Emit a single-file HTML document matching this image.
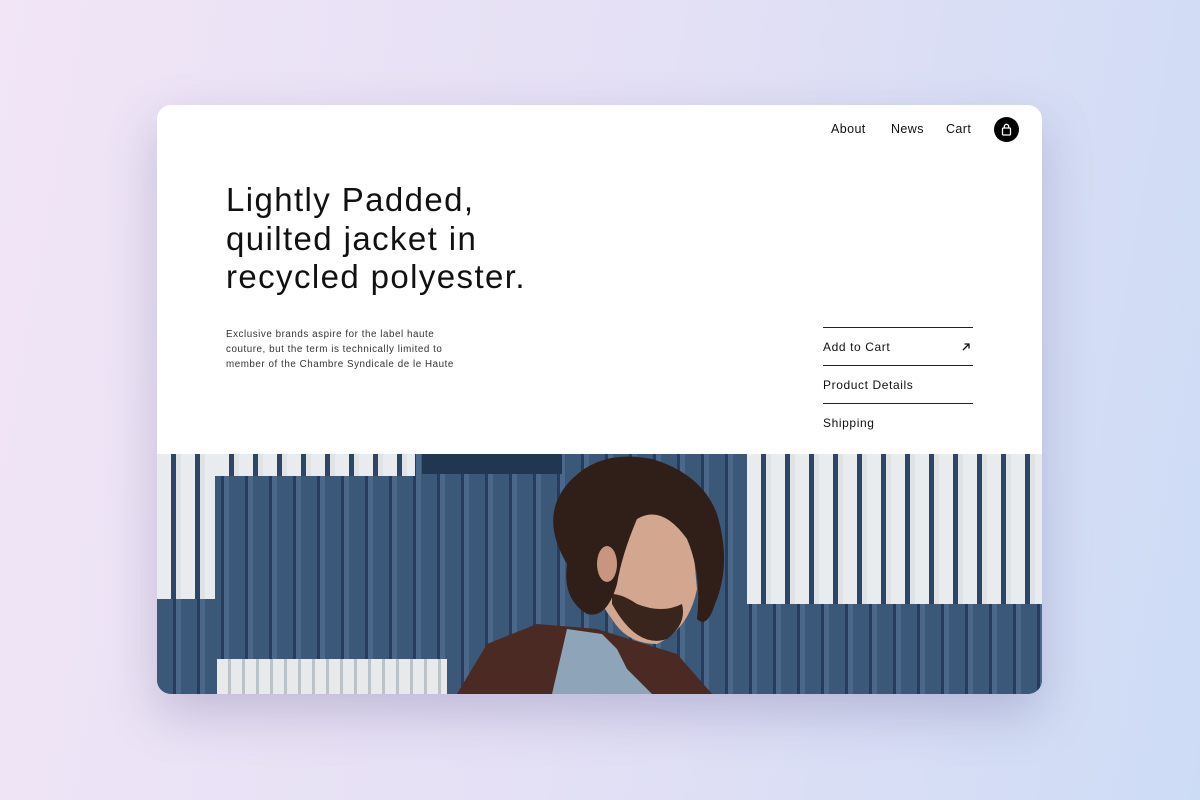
<!DOCTYPE html>
<html><head><style>
*{margin:0;padding:0;box-sizing:border-box}
body{width:1200px;height:800px;overflow:hidden;background:linear-gradient(100deg,#f1e5f6 0%,#e4e0f5 50%,#cddcf5 100%);font-family:"Liberation Sans",sans-serif;color:#111}
.card{position:absolute;left:157px;top:105px;width:885px;height:589px;background:#fff;border-radius:14px;overflow:hidden;box-shadow:0 20px 50px rgba(80,70,130,.25)}
.nav{position:absolute;top:17px;font-size:12.5px;color:#111;letter-spacing:.4px}
.bag{position:absolute;left:837px;top:12px;width:25px;height:25px;border-radius:50%;background:#000}
h1{position:absolute;left:69px;top:76px;font-weight:400;font-size:33px;line-height:38.5px;letter-spacing:1.4px;color:#111}
.p{position:absolute;left:69px;top:222px;font-size:9.8px;line-height:15px;color:#333;letter-spacing:.55px}
.menu{position:absolute;left:666px;top:222px;width:150px}
.menu div{height:38px;border-top:1px solid #222;font-size:12px;padding-top:12px;position:relative;letter-spacing:.6px}
.img{position:absolute;left:0;top:349px;width:885px;height:240px;background:#3a5474;overflow:hidden}
.s{position:absolute;background:repeating-linear-gradient(90deg,#e9ecee 0 14px,#2e4666 14px 19px,#dfe3e6 19px 24px)}
.d{position:absolute;background:repeating-linear-gradient(90deg,#3c5879 0 16px,#263c5a 16px 19px,#4b6789 19px 24px)}
</style></head><body>
<div class="card">
<div class="nav" style="left:674px">About</div>
<div class="nav" style="left:734px">News</div>
<div class="nav" style="left:789px">Cart</div>
<div class="bag"><svg width="25" height="25" viewBox="0 0 25 25"><rect x="8.5" y="11" width="8" height="7" rx="1" fill="none" stroke="#fff" stroke-width="1.3"/><path d="M10.3 11V9.5a2.2 2.2 0 0 1 4.4 0V11" fill="none" stroke="#fff" stroke-width="1.3"/></svg></div>
<h1>Lightly Padded,<br>quilted jacket in<br>recycled polyester.</h1>
<div class="p">Exclusive brands aspire for the label haute<br>couture, but the term is technically limited to<br>member of the Chambre Syndicale de le Haute</div>
<div class="menu">
<div>Add to Cart<svg style="position:absolute;right:2px;top:14px" width="10" height="10" viewBox="0 0 10 10"><path d="M2 8L8 2M3.5 2H8V6.5" fill="none" stroke="#111" stroke-width="1.3"/></svg></div>
<div>Product Details</div>
<div>Shipping</div>
</div>
<div class="img">
<div class="d" style="left:0;top:0;width:885px;height:240px"></div>
<div class="s" style="left:0;top:0;width:58px;height:145px"></div>
<div class="s" style="left:58px;top:0;width:200px;height:22px"></div>
<div class="s" style="left:590px;top:0;width:295px;height:150px"></div>
<div style="position:absolute;left:265px;top:0;width:140px;height:20px;background:#213650"></div>
<div class="s" style="left:60px;top:205px;width:230px;height:35px;background:repeating-linear-gradient(90deg,#e7e9ea 0 11px,#bcc3c8 11px 14px)"></div>
<svg style="position:absolute;left:0;top:0" width="885" height="240" viewBox="0 0 885 240">
<path d="M300 240 L330 190 L380 170 L440 175 L520 200 L555 240Z" fill="#4a2a22"/>
<path d="M395 240 L410 175 L445 180 L460 195 L470 215 L495 240Z" fill="#8ea4b8"/>
<path d="M450 60 Q510 45 535 80 L540 135 Q532 175 500 190 Q470 190 455 165 Q435 140 430 100 Z" fill="#d3a68f"/>
<path d="M455 150 Q480 195 510 185 Q530 170 525 150 Q505 160 480 150 Q465 140 455 140Z" fill="#3a251c"/>
<path d="M410 110 Q380 60 415 25 Q445 -5 495 5 Q545 20 560 60 Q575 110 558 150 Q550 175 540 165 Q545 120 530 85 Q505 50 480 65 Q465 100 460 130 Q450 165 430 160 Q405 145 410 110Z" fill="#2f1f18"/>
<ellipse cx="450" cy="110" rx="10" ry="18" fill="#c89580"/>
</svg>
</div>
</div>
</body></html>
